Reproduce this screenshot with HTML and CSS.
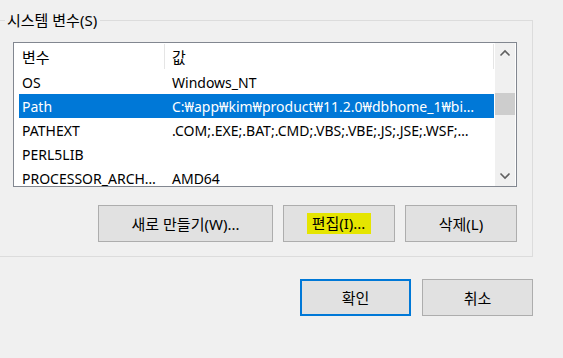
FILE: index.html
```html
<!DOCTYPE html>
<html lang="ko">
<head>
<meta charset="utf-8">
<link rel="stylesheet" href="styles.css">
</head>
<body>
<div class="group">
  <div class="legend">시스템 변수(S)</div>
  <div class="list">
    <div class="table">
      <div class="hdr">
        <div class="hcell c1">변수</div>
        <div class="hcell c2">값</div>
      </div>
      <div class="row"><div class="cell c1">OS</div><div class="cell c2">Windows_NT</div></div>
      <div class="row sel"><div class="cell c1">Path</div><div class="cell c2">C:₩app₩kim₩product₩11.2.0₩dbhome_1₩bi…</div></div>
      <div class="row"><div class="cell c1">PATHEXT</div><div class="cell c2">.COM;.EXE;.BAT;.CMD;.VBS;.VBE;.JS;.JSE;.WSF;…</div></div>
      <div class="row"><div class="cell c1">PERL5LIB</div><div class="cell c2"></div></div>
      <div class="row"><div class="cell c1">PROCESSOR_ARCH…</div><div class="cell c2">AMD64</div></div>
    </div>
    <div class="vscroll">
      <div class="arrow">
        <svg width="12" height="8" viewBox="0 0 12 8"><path d="M1.5 6.5 L6 2 L10.5 6.5" fill="none" stroke="#606060" stroke-width="1.6"/></svg>
      </div>
      <div class="track"><div class="thumb"></div></div>
      <div class="arrow">
        <svg width="12" height="8" viewBox="0 0 12 8"><path d="M1.5 1.5 L6 6 L10.5 1.5" fill="none" stroke="#606060" stroke-width="1.6"/></svg>
      </div>
    </div>
  </div>
  <div class="btnrow">
    <button class="btn wnew">새로 만들기(W)...</button>
    <button class="btn wmid"><span class="mark">편집(I)...</span></button>
    <button class="btn wmid">삭제(L)</button>
  </div>
</div>
<div class="footer">
  <button class="btn wok default">확인</button>
  <button class="btn wok">취소</button>
</div>
</body>
</html>
```
FILE: styles.css
```css
* { box-sizing: border-box; }
html, body {
  margin: 0;
  padding: 0;
  background: #f0f0f0;
  width: 563px;
  height: 358px;
  overflow: hidden;
}
body {
  font-family: "Noto Sans", "Noto Sans CJK KR", sans-serif;
  font-size: 14px;
  color: #000;
}
.group {
  position: relative;
  margin-top: 20px;
  width: 533px;
  border: 1px solid #dcdcdc;
  border-left: 0;
  padding: 21px 15px 14px 13px;
}
.legend {
  position: absolute;
  top: -11px;
  left: 5px;
  padding: 0 3px 0 2px;
  background: #f0f0f0;
  line-height: 20px;
  font-size: 15px;
}
.list {
  height: 145px;
  border: 1px solid #828790;
  background: #fff;
  display: flex;
  overflow: hidden;
}
.table {
  flex: 1;
  min-width: 0;
}
.hdr {
  display: flex;
  height: 27px;
  width: 480px;
  align-items: stretch;
  font-size: 15px;
}
.hcell {
  display: flex;
  align-items: center;
  border-right: 1px solid #e5e5e5;
  margin: 1px 0 1px;
}
.hdr .c1 { width: 151px; padding-left: 8px; }
.hdr .c2 { flex: 1; padding-left: 7px; }
.row {
  display: flex;
  height: 24px;
  align-items: center;
  margin-left: 5px;
  width: 475px;
  white-space: nowrap;
}
.row.sel { background: #0078d7; color: #fff; }
.cell { overflow: hidden; }
.row .c1 { width: 146px; padding-left: 3px; }
.row .c2 { flex: 1; padding-left: 7px; }
.vscroll {
  width: 20px;
  margin-right: 1px;
  background: #f0f0f0;
  display: flex;
  flex-direction: column;
}
.arrow {
  height: 20px;
  display: flex;
  align-items: center;
  justify-content: center;
}
.track { flex: 1; padding-top: 30px; }
.thumb { height: 22px; background: #cdcdcd; }
.btnrow {
  display: flex;
  justify-content: flex-end;
  gap: 10px;
  margin-top: 18px;
}
.btn {
  font-family: "Noto Sans", "Noto Sans CJK KR", sans-serif;
  font-size: 15px;
  color: #000;
  height: 37px;
  background: #e1e1e1;
  border: 1px solid #adadad;
  padding: 0;
  display: flex;
  align-items: center;
  justify-content: center;
}
.wnew { width: 175px; }
.wmid { width: 112px; }
.wok { width: 111px; }
.mark {
  background: #e5e500;
  padding: 0 6px 0 5px;
  line-height: 21px;
}
.btn.default { border: 2px solid #0078d7; }
.footer {
  display: flex;
  justify-content: flex-end;
  gap: 11px;
  width: 533px;
  margin-top: 22px;
}
```
